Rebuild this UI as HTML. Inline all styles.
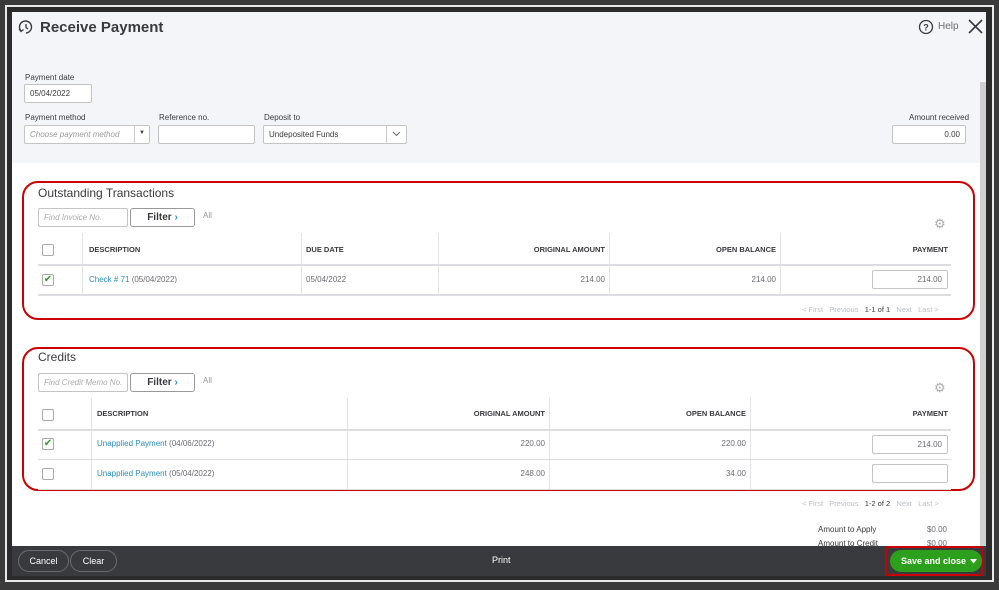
<!DOCTYPE html>
<html><head><meta charset="utf-8"><style>
*{box-sizing:border-box;margin:0;padding:0}
body{width:999px;height:590px;overflow:hidden;background:#3a3a3a;font-family:"Liberation Sans",sans-serif;position:relative;color:#393a3d}
.a{position:absolute}
.frame{left:5px;top:5px;width:989px;height:577px;border:2px solid #e8e8e8;background:#2b2b2b}
.page{left:12px;top:12px;width:974px;height:534px;background:#fff;overflow:hidden}
.hdr{left:0;top:0;width:974px;height:151px;background:#f4f5f8}
.lbl{font-size:8px;color:#393a3d}
.inp{background:#fff;border:1px solid #c4c4c4;border-radius:2px;font-size:8px;padding-left:5px;line-height:17px;height:19px}
.red{border:2px solid #c00;border-radius:16px}
.th{font-size:7.5px;font-weight:bold;color:#393a3d}
.td{font-size:8px;color:#6b6c72}
.lnk{color:#2a8bc7}
.cb{width:12px;height:12px;border:1px solid #aaa;border-radius:2px;background:#fff}
.vl{width:1px;background:#e3e4e7}
.hl{height:2px;background:#dcdde0}
.pg{font-size:7.5px;color:#babec5}
.btnf{border:1px solid #999;border-radius:3px;background:#fff;font-size:10px;font-weight:bold;text-align:center;line-height:17px}
.bar{left:12px;top:546px;width:974px;height:30px;background:#393a3d}
.pill{border:1px solid #6b6c72;border-radius:14px;color:#fff;font-size:9px;text-align:center;line-height:20px;height:22px}
</style></head><body>
<div class="a frame"></div>
<div class="a page">
 <div class="a hdr"></div>
 <svg class="a" style="left:5px;top:6px" width="18" height="18" viewBox="0 0 18 18"><path d="M4 13 A6 6 0 1 1 9 15" fill="none" stroke="#393a3d" stroke-width="1.4"/><path d="M9 6v3.5l2 1.5" fill="none" stroke="#393a3d" stroke-width="1.3"/><path d="M2 11l2 2.5 2.5-2" fill="none" stroke="#393a3d" stroke-width="1.2"/></svg>
 <div class="a" style="left:28px;top:7px;font-size:15px;font-weight:bold;color:#393a3d">Receive Payment</div>
 <svg class="a" style="left:906px;top:7px" width="16" height="16"><circle cx="8" cy="8" r="6.5" fill="none" stroke="#393a3d" stroke-width="1.3"/><text x="8" y="11.5" font-size="9" font-weight="bold" text-anchor="middle" fill="#393a3d" font-family="Liberation Sans">?</text></svg>
 <div class="a" style="left:926px;top:9px;font-size:10px;color:#6b6c72">Help</div>
 <svg class="a" style="left:956px;top:7px" width="15" height="15"><path d="M1 1L14 14M14 1L1 14" stroke="#393a3d" stroke-width="1.6"/></svg>
 <div class="a lbl" style="left:13px;top:61px">Payment date</div>
 <div class="a inp" style="left:12px;top:72px;width:68px;color:#393a3d">05/04/2022</div>
 <div class="a lbl" style="left:13px;top:101px">Payment method</div>
 <div class="a inp" style="left:12px;top:113px;width:126px;color:#999;font-style:italic">Choose payment method</div>
 <div class="a" style="left:122px;top:114px;width:1px;height:17px;background:#ccc"></div>
 <div class="a" style="left:127px;top:118px;font-size:6px">▼</div>
 <div class="a lbl" style="left:147px;top:101px">Reference no.</div>
 <div class="a inp" style="left:146px;top:113px;width:97px"></div>
 <div class="a lbl" style="left:252px;top:101px">Deposit to</div>
 <div class="a inp" style="left:251px;top:113px;width:144px">Undeposited Funds</div>
 <div class="a" style="left:374px;top:114px;width:1px;height:17px;background:#ccc"></div>
 <svg class="a" style="left:380px;top:119px" width="9" height="6"><path d="M1 1l3.5 3.5L8 1" fill="none" stroke="#6b6c72" stroke-width="1"/></svg>
 <div class="a lbl" style="left:897px;top:101px">Amount received</div>
 <div class="a inp" style="left:880px;top:113px;width:74px;text-align:right;padding-right:5px">0.00</div>

 <div class="a red" style="left:10px;top:169px;width:953px;height:139px"></div>
 <div class="a" style="left:26px;top:174px;font-size:12px">Outstanding Transactions</div>
 <div class="a inp" style="left:26px;top:196px;width:90px;color:#aaa;font-style:italic">Find Invoice No.</div>
 <div class="a btnf" style="left:118px;top:196px;width:65px">Filter <span style="color:#2a8bc7">›</span></div>
 <div class="a" style="left:191px;top:199px;font-size:8px;color:#999">All</div>
 <div class="a" style="left:922px;top:204px;font-size:13px;color:#aaa">⚙</div>
 <div class="a cb" style="left:30px;top:232px"></div>
 <div class="a th" style="left:77px;top:233px">DESCRIPTION</div>
 <div class="a th" style="left:294px;top:233px">DUE DATE</div>
 <div class="a th" style="left:500px;top:233px;width:93px;text-align:right">ORIGINAL AMOUNT</div>
 <div class="a th" style="left:680px;top:233px;width:84px;text-align:right">OPEN BALANCE</div>
 <div class="a th" style="left:880px;top:233px;width:56px;text-align:right">PAYMENT</div>
 <div class="a vl" style="left:70px;top:221px;height:62px"></div>
 <div class="a vl" style="left:289px;top:221px;height:62px"></div>
 <div class="a vl" style="left:426px;top:221px;height:62px"></div>
 <div class="a vl" style="left:597px;top:221px;height:62px"></div>
 <div class="a vl" style="left:768px;top:221px;height:62px"></div>
 <div class="a hl" style="left:26px;top:252px;width:913px"></div>
 <div class="a hl" style="left:26px;top:282px;width:913px"></div>
 <div class="a cb" style="left:30px;top:262px;color:#2ca01c;font-size:10px;line-height:10px;text-align:center">✔</div>
 <div class="a td" style="left:77px;top:263px"><span class="lnk">Check # 71</span> (05/04/2022)</div>
 <div class="a td" style="left:294px;top:263px">05/04/2022</div>
 <div class="a td" style="left:540px;top:263px;width:53px;text-align:right">214.00</div>
 <div class="a td" style="left:710px;top:263px;width:54px;text-align:right">214.00</div>
 <div class="a inp" style="left:860px;top:258px;width:76px;text-align:right;padding-right:5px;color:#6b6c72">214.00</div>
 <div class="a pg" style="left:790px;top:293px">&lt; First &nbsp; Previous &nbsp; <span style="color:#393a3d">1-1 of 1</span> &nbsp; Next &nbsp; Last &gt;</div>

 <div class="a red" style="left:10px;top:335px;width:953px;height:144px"></div>
 <div class="a" style="left:26px;top:338px;font-size:12px">Credits</div>
 <div class="a inp" style="left:26px;top:361px;width:90px;color:#aaa;font-style:italic">Find Credit Memo No.</div>
 <div class="a btnf" style="left:118px;top:361px;width:65px">Filter <span style="color:#2a8bc7">›</span></div>
 <div class="a" style="left:191px;top:364px;font-size:8px;color:#999">All</div>
 <div class="a" style="left:922px;top:368px;font-size:13px;color:#aaa">⚙</div>
 <div class="a cb" style="left:30px;top:397px"></div>
 <div class="a th" style="left:85px;top:397px">DESCRIPTION</div>
 <div class="a th" style="left:440px;top:397px;width:93px;text-align:right">ORIGINAL AMOUNT</div>
 <div class="a th" style="left:650px;top:397px;width:84px;text-align:right">OPEN BALANCE</div>
 <div class="a th" style="left:880px;top:397px;width:56px;text-align:right">PAYMENT</div>
 <div class="a vl" style="left:79px;top:386px;height:92px"></div>
 <div class="a vl" style="left:335px;top:386px;height:92px"></div>
 <div class="a vl" style="left:537px;top:386px;height:92px"></div>
 <div class="a vl" style="left:738px;top:386px;height:92px"></div>
 <div class="a hl" style="left:26px;top:417px;width:913px"></div>
 <div class="a hl" style="left:26px;top:447px;width:913px;height:1px"></div>
 <div class="a hl" style="left:26px;top:477px;width:913px;height:1px"></div>
 <div class="a cb" style="left:30px;top:426px;color:#2ca01c;font-size:10px;line-height:10px;text-align:center">✔</div>
 <div class="a td" style="left:85px;top:427px"><span class="lnk">Unapplied Payment</span> (04/06/2022)</div>
 <div class="a td" style="left:480px;top:427px;width:53px;text-align:right">220.00</div>
 <div class="a td" style="left:680px;top:427px;width:54px;text-align:right">220.00</div>
 <div class="a inp" style="left:860px;top:423px;width:76px;text-align:right;padding-right:5px;color:#6b6c72">214.00</div>
 <div class="a cb" style="left:30px;top:456px"></div>
 <div class="a td" style="left:85px;top:457px"><span class="lnk">Unapplied Payment</span> (05/04/2022)</div>
 <div class="a td" style="left:480px;top:457px;width:53px;text-align:right">248.00</div>
 <div class="a td" style="left:680px;top:457px;width:54px;text-align:right">34.00</div>
 <div class="a inp" style="left:860px;top:452px;width:76px"></div>
 <div class="a pg" style="left:790px;top:487px">&lt; First &nbsp; Previous &nbsp; <span style="color:#393a3d">1-2 of 2</span> &nbsp; Next &nbsp; Last &gt;</div>
 <div class="a" style="left:806px;top:513px;font-size:8px">Amount to Apply</div>
 <div class="a" style="left:900px;top:513px;font-size:8px;width:35px;text-align:right;color:#6b6c72">$0.00</div>
 <div class="a" style="left:806px;top:527px;font-size:8px">Amount to Credit</div>
 <div class="a" style="left:900px;top:527px;font-size:8px;width:35px;text-align:right;color:#6b6c72">$0.00</div>
 <div class="a" style="left:968px;top:70px;width:6px;height:464px;background:#d0d0d0"></div>
</div>
<div class="a bar"></div>
<div class="a pill" style="left:18px;top:550px;width:51px">Cancel</div>
<div class="a pill" style="left:70px;top:550px;width:47px">Clear</div>
<div class="a" style="left:492px;top:555px;font-size:9px;color:#fff">Print</div>
<div class="a" style="left:885px;top:546px;width:98px;height:30px;border:2px solid #c00;border-radius:3px"></div>
<div class="a" style="left:890px;top:550px;width:92px;height:22px;background:#2ca01c;border-radius:11px;color:#fff;font-size:9px;font-weight:bold;line-height:22px;padding-left:11px">Save and close</div>
<svg class="a" style="left:970px;top:559px" width="7" height="5"><path d="M0 0h7L3.5 4.5z" fill="#fff"/></svg>
</body></html>
